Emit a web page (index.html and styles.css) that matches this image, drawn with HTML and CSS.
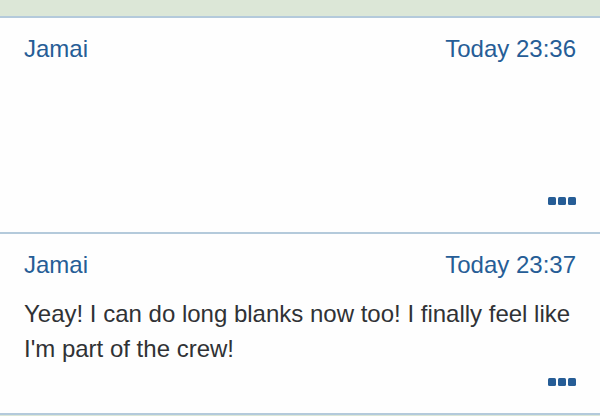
FILE: index.html
```html
<!DOCTYPE html>
<html lang="en">
<head>
<meta charset="utf-8">
<meta name="viewport" content="width=device-width, initial-scale=1">
<title>Messages</title>
<link rel="stylesheet" href="styles.css">
</head>
<body>
<main class="thread">
  <article class="post">
    <header class="post-head"><a class="link" href="#">Jamai</a><a class="link" href="#">Today 23:36</a></header>
    <p class="post-text"><br><br><br></p>
    <footer class="post-foot"><button class="more" type="button" aria-label="More options"><svg width="28" height="8" viewBox="0 0 28 8" aria-hidden="true"><rect width="8" height="8" rx="1.5"/><rect x="10" width="8" height="8" rx="1.5"/><rect x="20" width="8" height="8" rx="1.5"/></svg></button></footer>
  </article>
  <article class="post">
    <header class="post-head"><a class="link" href="#">Jamai</a><a class="link" href="#">Today 23:37</a></header>
    <p class="post-text">Yeay! I can do long blanks now too! I finally feel like I'm part of the crew!</p>
    <footer class="post-foot"><button class="more" type="button" aria-label="More options"><svg width="28" height="8" viewBox="0 0 28 8" aria-hidden="true"><rect width="8" height="8" rx="1.5"/><rect x="10" width="8" height="8" rx="1.5"/><rect x="20" width="8" height="8" rx="1.5"/></svg></button></footer>
  </article>
</main>
</body>
</html>
```
FILE: styles.css
```css
* { box-sizing: border-box; }
body {
  margin: 0;
  padding-top: 16px;
  background: #dce7d7;
  color: #303235;
  font: 24px/35px "Liberation Sans", Arial, sans-serif;
}
.thread { background: #fefefe; border-bottom: 2px solid #b4cadb; }
.post { padding: 13px 24px 27px; border-top: 2px solid #b4cadb; }
.post-head { display: flex; justify-content: space-between; }
.link { color: #265d96; text-decoration: none; }
.post-text { margin: 14px 0 12px; }
.post-foot { display: flex; justify-content: flex-end; }
.more { display: flex; padding: 0; border: 0; background: none; fill: #265d96; cursor: pointer; }
```
